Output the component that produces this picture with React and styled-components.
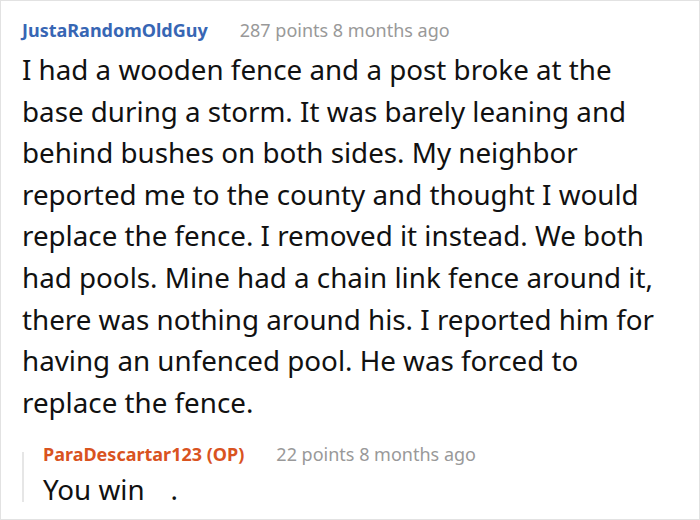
import React from "react";
import styled, { createGlobalStyle } from "styled-components";

const Global = createGlobalStyle`
  html, body { margin: 0; padding: 0; background: #fff; }
  body { font-family: "Noto Sans", "Open Sans", sans-serif; }
`;

const Frame = styled.div`
  box-sizing: border-box;
  width: 700px;
  height: 520px;
  border: 1px solid #e2e2e2;
  padding: 16px 10px 0 21px;
  overflow: hidden;
`;

const Header = styled.div`
  display: flex;
  align-items: baseline;
  gap: 32px;
  height: ${(p) => p.$h}px;
  line-height: 26px;
  white-space: nowrap;
`;

const Author = styled.span`
  font-size: 18px;
  font-weight: 700;
  color: ${(p) => p.$color};
`;

const Meta = styled.span`
  font-size: 18px;
  color: #999;
`;

const Body = styled.p`
  margin: 0;
  font-size: 27.75px;
  line-height: 41.6px;
  color: #111;
  white-space: nowrap;
`;

const Reply = styled.div`
  position: relative;
  margin-top: 18px;
  padding-left: 21px;
  &::before {
    content: "";
    position: absolute;
    left: 0;
    top: 11px;
    width: 2px;
    height: 50px;
    background: #e6e6e6;
  }
`;

const Blank = styled.span`
  display: inline-block;
  width: 26px;
`;

const lines = [
  "I had a wooden fence and a post broke at the",
  "base during a storm. It was barely leaning and",
  "behind bushes on both sides. My neighbor",
  "reported me to the county and thought I would",
  "replace the fence. I removed it instead. We both",
  "had pools. Mine had a chain link fence around it,",
  "there was nothing around his. I reported him for",
  "having an unfenced pool. He was forced to",
  "replace the fence.",
];

export default function App() {
  return (
    <>
      <Global />
      <Frame>
        <Header $h={32}>
          <Author $color="#3766b4">JustaRandomOldGuy</Author>
          <Meta>287 points 8 months ago</Meta>
        </Header>
        <Body>
          {lines.map((l, i) => (
            <React.Fragment key={i}>
              {l}
              {i < lines.length - 1 && <br />}
            </React.Fragment>
          ))}
        </Body>
        <Reply>
          <Header $h={28}>
            <Author $color="#d9531f">ParaDescartar123 (OP)</Author>
            <Meta>22 points 8 months ago</Meta>
          </Header>
          <Body>
            You win<Blank />.
          </Body>
        </Reply>
      </Frame>
    </>
  );
}
